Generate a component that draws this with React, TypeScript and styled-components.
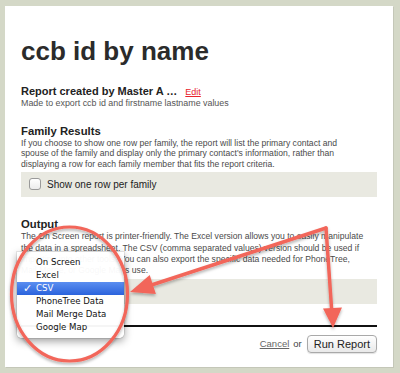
import { createGlobalStyle, styled } from 'styled-components';

const GlobalStyle = createGlobalStyle`
  html, body {
    margin: 0;
    padding: 0;
    background: #d4d8c7;
  }
  body {
    font-family: 'Liberation Sans', Arial, Helvetica, sans-serif;
  }
`;

// 전체 화면 (베이지 테두리)
const Page = styled.div`
  position: relative;
  width: 400px;
  height: 373px;
  box-sizing: border-box;
  padding: 6px 7px 6px 5px;
  background: #d4d8c7;
  overflow: hidden;
`;

// 흰 종이 부분
const Panel = styled.div`
  width: 388px;
  height: 361px;
  box-sizing: border-box;
  padding: 29.5px 16px 0 16px;
  background: #fff;
  box-shadow: 1px 1px 0 #c4c7b8;
  display: flex;
  flex-direction: column;
`;

const Title = styled.h1`
  margin: 0;
  font-size: 26px;
  line-height: 30px;
  font-weight: bold;
  color: #2b2b2b;
`;

const ReportLine = styled.div`
  margin-top: 19px;
  font-size: 11px;
  line-height: 12px;
  font-weight: bold;
  color: #222;
  display: flex;
  align-items: baseline;
  gap: 8px;
`;

const EditLink = styled.a`
  font-size: 9px;
  font-weight: normal;
  color: #e8242b;
  text-decoration: underline;
`;

const SubText = styled.div`
  font-size: 8.9px;
  line-height: 10px;
  color: #555;
`;

const SectionTitle = styled.h2<{ $gap: number }>`
  margin: ${(p) => p.$gap}px 0 0 0;
  font-size: 11.3px;
  line-height: 12px;
  font-weight: bold;
  color: #222;
`;

const Para = styled.p<{ $lh: number }>`
  margin: 1px 0 0 0;
  font-size: 8.6px;
  line-height: ${(p) => p.$lh}px;
  color: #4a4a4a;
  white-space: nowrap;
`;

const OptionBox = styled.div<{ $gap: number }>`
  margin-top: ${(p) => p.$gap}px;
  height: 25px;
  background: #e9e9e1;
  display: flex;
  align-items: center;
  padding-left: 8px;
  gap: 6px;
`;

const CheckBox = styled.span`
  width: 12px;
  height: 12px;
  box-sizing: border-box;
  border: 1px solid #9a9a9a;
  border-radius: 3px;
  background: linear-gradient(#fff, #ececec);
`;

const CheckLabel = styled.span`
  font-size: 10px;
  color: #222;
`;

const Rule = styled.div`
  margin-top: 21.5px;
  height: 1.5px;
  background: #111;
`;

const Footer = styled.div`
  margin-top: 8px;
  display: flex;
  justify-content: flex-end;
  align-items: center;
  gap: 4px;
`;

const CancelLink = styled.a`
  font-size: 9.5px;
  color: #666;
  text-decoration: underline;
`;

const OrText = styled.span`
  font-size: 9.5px;
  color: #444;
  margin-right: 1px;
`;

const RunButton = styled.button`
  height: 18px;
  padding: 0 6px;
  font-family: 'Liberation Sans', Arial, sans-serif;
  font-size: 11px;
  color: #222;
  border: 1px solid #a9a9a9;
  border-radius: 4px;
  background: linear-gradient(#ffffff, #e9e9e9);
  box-shadow: 0 1px 1px rgba(0, 0, 0, 0.12);
`;

// 출력 형식 드롭다운 (팝업 메뉴)
const Menu = styled.ul`
  position: absolute;
  left: 17px;
  top: 252px;
  width: 107px;
  margin: 0;
  padding: 4px 0;
  list-style: none;
  background: rgba(255, 255, 255, 0.96);
  border-radius: 0 0 5px 5px;
  box-shadow: 0 3px 8px rgba(0, 0, 0, 0.4), 0 0 0 1px rgba(0, 0, 0, 0.08);
`;

const MenuItem = styled.li<{ $selected?: boolean }>`
  position: relative;
  height: 13px;
  line-height: 13px;
  padding-left: 19px;
  font-family: 'DejaVu Sans', sans-serif;
  font-size: 8.6px;
  color: ${(p) => (p.$selected ? '#fff' : '#111')};
  background: ${(p) => (p.$selected ? 'linear-gradient(#5a8ef0, #2b63dc)' : 'transparent')};
`;

const Check = styled.span`
  position: absolute;
  left: 6px;
  top: 0;
  font-size: 11px;
  font-weight: bold;
`;

const Overlay = styled.svg`
  position: absolute;
  left: 0;
  top: 0;
  pointer-events: none;
`;

const outputs = ['On Screen', 'Excel', 'CSV', 'PhoneTree Data', 'Mail Merge Data', 'Google Map'];

const Annotations = () => {
  const red = '#f2665a';
  return (
    <Overlay width='400' height='373' viewBox='0 0 400 373'>
      <defs>
        <filter id='sh' x='-20%' y='-20%' width='140%' height='140%'>
          <feDropShadow dx='0' dy='2' stdDeviation='1.8' floodColor='#000' floodOpacity='0.3' />
        </filter>
      </defs>
      <g filter='url(#sh)'>
        <ellipse cx='69.5' cy='294' rx='58' ry='67' fill='none' stroke={red} strokeWidth='3.2' />
        <line x1='326' y1='228' x2='153' y2='284.5' stroke={red} strokeWidth='3.5' strokeLinecap='round' />
        <polygon points='130,292 149.7,275 155.9,294' fill={red} />
        <line x1='326' y1='228' x2='331.6' y2='309' stroke={red} strokeWidth='3.5' strokeLinecap='round' />
        <polygon points='333,328 323,308.5 342,307.5' fill={red} />
      </g>
    </Overlay>
  );
};

const App = () => {
  return (
    <Page>
      <GlobalStyle />
      <Panel>
        <Title>ccb id by name</Title>
        <ReportLine>
          Report created by Master A …<EditLink href='#'>Edit</EditLink>
        </ReportLine>
        <SubText>Made to export ccb id and firstname lastname values</SubText>

        <SectionTitle $gap={17}>Family Results</SectionTitle>
        <Para $lh={10.8}>
          If you choose to show one row per family, the report will list the primary contact and
          <br />
          spouse of the family and display only the primary contact's information, rather than
          <br />
          displaying a row for each family member that fits the report criteria.
        </Para>
        <OptionBox $gap={2}>
          <CheckBox />
          <CheckLabel>Show one row per family</CheckLabel>
        </OptionBox>

        <SectionTitle $gap={21.5}>Output</SectionTitle>
        <Para $lh={11.2}>
          The On Screen report is printer-friendly. The Excel version allows you to easily manipulate
          <br />
          the data in a spreadsheet. The CSV (comma separated values) version should be used if
          <br />
          importing into other tools. You can also export the specific data needed for PhoneTree,
          <br />
          Mail Merge, or Google Maps use.
        </Para>
        <OptionBox $gap={2.7} />

        <Rule />
        <Footer>
          <CancelLink href='#'>Cancel</CancelLink>
          <OrText>or</OrText>
          <RunButton>Run Report</RunButton>
        </Footer>
      </Panel>

      <Menu>
        {outputs.map((o) => (
          <MenuItem key={o} $selected={o === 'CSV'}>
            {o === 'CSV' && <Check>✓</Check>}
            {o}
          </MenuItem>
        ))}
      </Menu>
      <Annotations />
    </Page>
  );
};

export default App;
